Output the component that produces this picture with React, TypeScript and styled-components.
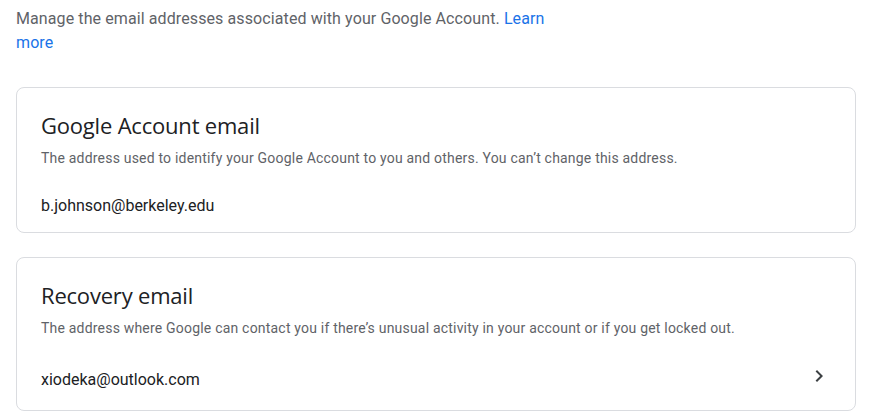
import React from "react";
import styled, { createGlobalStyle } from "styled-components";

const Global = createGlobalStyle`
  html, body { margin: 0; padding: 0; background: #fff; }
  body { font-family: Roboto, "Liberation Sans", Arial, sans-serif; }
`;

const Page = styled.div`
  padding: 7px 21px 0 16px;
  display: flex;
  flex-direction: column;
`;

const Intro = styled.p`
  margin: 0 0 32px;
  max-width: 560px;
  font-size: 16px;
  line-height: 24px;
  color: #5f6368;
  letter-spacing: 0.1px;
`;

const Link = styled.a`
  color: #1a73e8;
  text-decoration: none;
`;

const Cards = styled.div`
  display: flex;
  flex-direction: column;
  gap: 24px;
`;

const Card = styled.section`
  border: 1px solid #dadce0;
  border-radius: 8px;
  padding: 23px 0 0;
  display: flex;
  flex-direction: column;
`;

const Header = styled.div`
  padding: 0 24px;
`;

const Title = styled.h2`
  margin: 0;
  font-family: "Open Sans", "Noto Sans", sans-serif;
  font-weight: 400;
  font-size: 22px;
  line-height: 28px;
  color: #202124;
  letter-spacing: -0.2px;
`;

const Desc = styled.p`
  margin: 9px 0 0;
  font-size: 14px;
  line-height: 20px;
  color: #5f6368;
  letter-spacing: 0.2px;
`;

const Row = styled.div<{ $clickable?: boolean }>`
  display: flex;
  align-items: flex-start;
  justify-content: space-between;
  padding: ${(p) => (p.$clickable ? "30px 24px 18px" : "26px 24px 14px")};
  font-size: 16px;
  line-height: 24px;
  color: #202124;
`;

const ChevronBox = styled.span`
  display: flex;
  width: 24px;
  height: 24px;
  margin-top: -4px;
`;

const Chevron = () => (
  <ChevronBox>
    <svg width="24" height="24" viewBox="0 0 24 24" fill="#3c4043">
      <path d="M8.59 16.59 13.17 12 8.59 7.41 10 6l6 6-6 6z" />
    </svg>
  </ChevronBox>
);

export default function App() {
  return (
    <>
      <Global />
      <Page>
        <Intro>
          Manage the email addresses associated with your Google Account.{" "}
          <Link href="#">Learn more</Link>
        </Intro>
        <Cards>
          <Card>
            <Header>
              <Title>Google Account email</Title>
              <Desc>
                The address used to identify your Google Account to you and others. You can’t change this address.
              </Desc>
            </Header>
            <Row>b.johnson@berkeley.edu</Row>
          </Card>
          <Card>
            <Header>
              <Title>Recovery email</Title>
              <Desc>
                The address where Google can contact you if there’s unusual activity in your account or if you get locked out.
              </Desc>
            </Header>
            <Row $clickable>
              <span>xiodeka@outlook.com</span>
              <Chevron />
            </Row>
          </Card>
        </Cards>
      </Page>
    </>
  );
}
